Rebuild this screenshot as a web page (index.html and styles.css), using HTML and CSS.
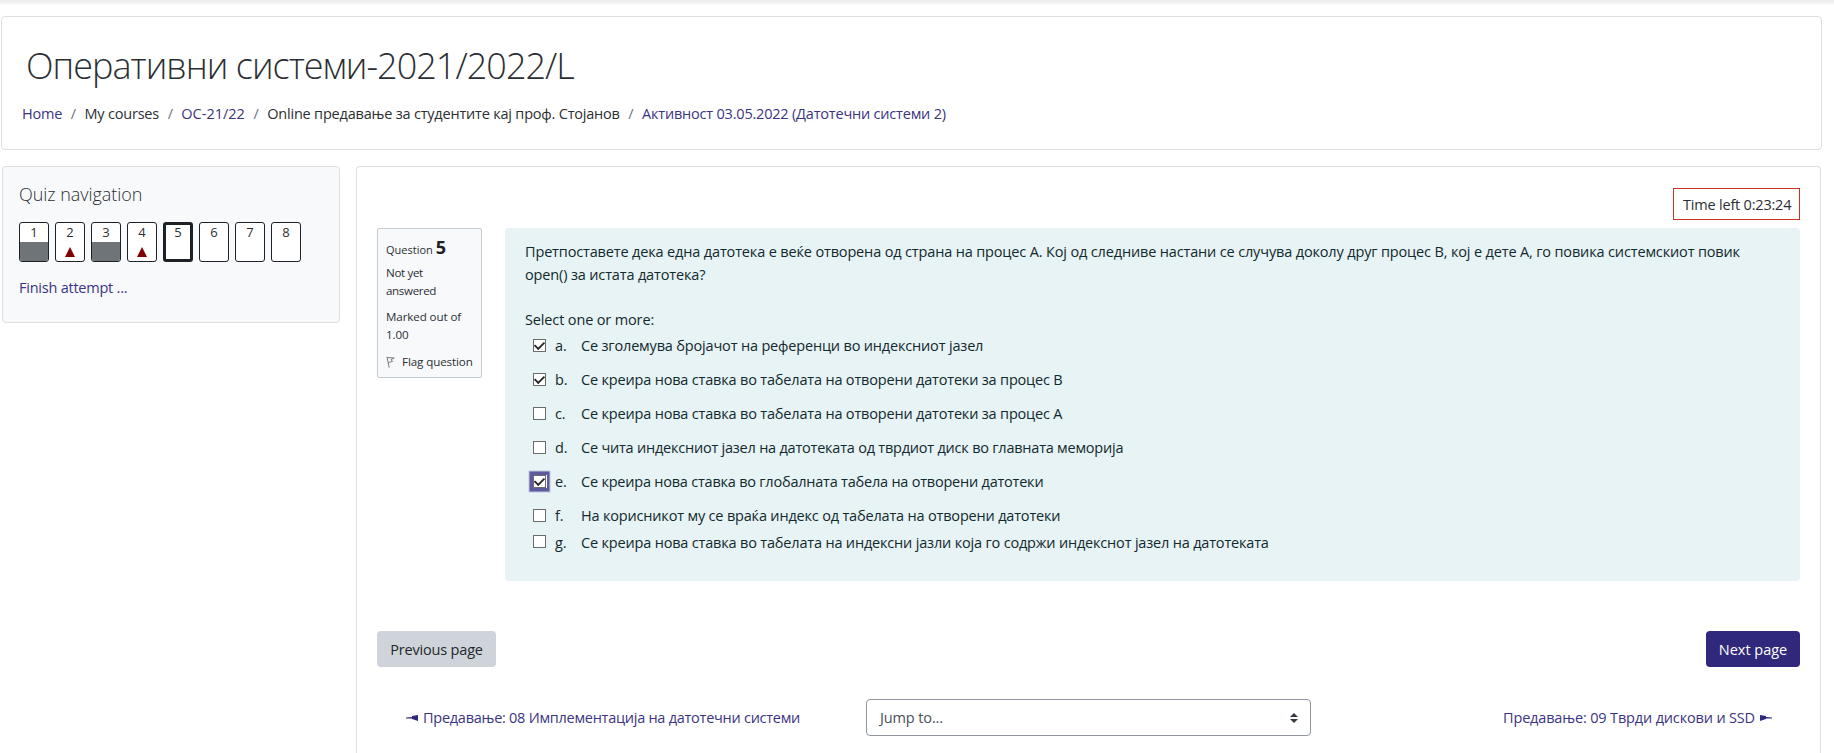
FILE: index.html
```
<!DOCTYPE html>
<html lang="mk">
<head>
<meta charset="utf-8">
<title>Оперативни системи-2021/2022/L</title>
<link rel="stylesheet" href="styles.css">
</head>
<body>
<div class="topbar"></div>
<div class="page">
  <header class="card page-header">
    <h1 class="course-title">Оперативни системи-2021/2022/L</h1>
    <nav class="breadcrumb">
      <a class="link" href="#">Home</a><span class="sep">/</span><span>My courses</span><span class="sep">/</span><a class="link wide" href="#">ОС-21/22</a><span class="sep">/</span><span>Online предавање за студентите кај проф. Стојанов</span><span class="sep">/</span><a class="link" href="#">Активност 03.05.2022 (Датотечни системи 2)</a>
    </nav>
  </header>
  <div class="columns">
    <aside class="card quiz-nav">
      <h2 class="quiz-nav-title">Quiz navigation</h2>
      <div class="qn-buttons">
        <a class="qn answered">1</a>
        <a class="qn flagged">2</a>
        <a class="qn answered">3</a>
        <a class="qn flagged">4</a>
        <a class="qn current">5</a>
        <a class="qn">6</a>
        <a class="qn">7</a>
        <a class="qn">8</a>
      </div>
      <a class="link finish" href="#">Finish attempt ...</a>
    </aside>
    <main class="card content">
      <div class="timer">Time left 0:23:24</div>
      <div class="question">
        <div class="info">
          <div class="info-no">Question <b>5</b></div>
          <div class="info-state">Not yet<br>answered</div>
          <div class="info-grade">Marked out of<br>1.00</div>
          <div class="info-flag"><svg class="flag" viewBox="0 0 9 12"><path d="M1 .8 3.2 11.6M1.2 1.5 8.2 2 5 3.6 6.6 5.4 2.4 6.6" fill="none" stroke="#777b80" stroke-width="1"/></svg>Flag question</div>
        </div>
        <div class="formulation">
          <p class="qtext">Претпоставете дека една датотека е веќе отворена од страна на процес А. Кој од следниве настани се случува доколу друг процес B, кој е дете А, го повика системскиот повик<br>open() за истата датотека?</p>
          <div class="prompt">Select one or more:</div>
          <div class="answers">
            <label class="answer"><input class="check" type="checkbox" checked><span class="letter">a.</span><span class="loose">Се зголемува бројачот на референци во индексниот јазел</span></label>
            <label class="answer"><input class="check" type="checkbox" checked><span class="letter">b.</span><span>Се креира нова ставка во табелата на отворени датотеки за процес B</span></label>
            <label class="answer"><input class="check" type="checkbox"><span class="letter">c.</span><span>Се креира нова ставка во табелата на отворени датотеки за процес А</span></label>
            <label class="answer"><input class="check" type="checkbox"><span class="letter">d.</span><span class="snug">Се чита индексниот јазел на датотеката од тврдиот диск во главната меморија</span></label>
            <label class="answer"><input class="check focused" type="checkbox" checked><span class="letter">e.</span><span class="snug">Се креира нова ставка во глобалната табела на отворени датотеки</span></label>
            <label class="answer"><input class="check" type="checkbox"><span class="letter">f.</span><span>На корисникот му се враќа индекс од табелата на отворени датотеки</span></label>
            <label class="answer"><input class="check" type="checkbox"><span class="letter">g.</span><span>Се креира нова ставка во табелата на индексни јазли која го содржи индекснот јазел на датотеката</span></label>
          </div>
        </div>
      </div>
      <div class="buttons">
        <button class="btn btn-prev">Previous page</button>
        <button class="btn btn-next">Next page</button>
      </div>
      <div class="activity-nav">
        <a class="link activity prev" href="#"><svg class="arrow" viewBox="0 0 12 6"><path d="M0 2.5 6 2V1L12 0V6L6 4V3.5L0 3.5Z"/></svg><span>Предавање: 08 Имплементација на датотечни системи</span></a>
        <div class="jump"><span>Jump to...</span><svg class="caret" viewBox="0 0 8 10"><path d="M4 0 8 4H0ZM4 10 0 6H8Z"/></svg></div>
        <a class="link activity next" href="#"><span>Предавање: 09 Тврди дискови и SSD</span><svg class="arrow" viewBox="0 0 12 6"><path d="M12 2.5 6 2V1L0 0V6L6 4V3.5L12 3.5Z"/></svg></a>
      </div>
    </main>
  </div>
</div>
</body>
</html>
```
FILE: styles.css
```
* { box-sizing: border-box; }

body {
  margin: 0;
  background: #fff;
  color: #2b2f33;
  font: 400 14.5px/23px "Open Sans", "Noto Sans", sans-serif;
  letter-spacing: -0.2px;
}

.topbar { height: 5px; background: linear-gradient(#efefef 40%, #fff); }

.page { padding: 11px 12px 0 1px; }

.card { border: 1px solid #dedfe1; border-radius: 4px; }

.link { color: #3b3482; text-decoration: none; }

.page-header { height: 134px; padding: 26px 20px 0; }

.course-title {
  margin: 0 0 14px;
  padding-left: 4px;
  font-size: 36px;
  line-height: 45px;
  font-weight: 300;
  letter-spacing: -0.97px;
}

.breadcrumb { display: flex; white-space: nowrap; }
.sep { padding: 0 8.6px; color: #6a737b; }
.wide { letter-spacing: 0; }

.columns { display: flex; align-items: flex-start; gap: 16px; margin-top: 16px; }

.quiz-nav {
  width: 338px;
  height: 157px;
  margin-left: 1px;
  padding: 15px 16px;
  background: #f8f9fb;
}
.quiz-nav-title {
  margin: 0 0 16px;
  font-size: 18px;
  line-height: 24px;
  font-weight: 300;
  letter-spacing: -0.05px;
}
.qn-buttons { display: flex; gap: 6px; margin-bottom: 14px; }
.qn {
  width: 30px;
  height: 40px;
  display: flex;
  flex-direction: column;
  align-items: center;
  border: 1px solid #1d2125;
  border-radius: 3px;
  background: #fff;
  font-size: 13px;
  line-height: 19px;
  letter-spacing: 0;
  overflow: hidden;
}
.qn.answered::after { content: ""; width: 100%; height: 19px; background: #6f7478; }
.qn.flagged::after {
  content: "";
  margin-top: 5px;
  border: 5px solid transparent;
  border-top: 0;
  border-bottom: 10px solid #800000;
}
.qn.current { border-width: 3px; line-height: 15px; }
.finish { letter-spacing: -0.23px; }

.content {
  flex: 1;
  height: 587px;
  margin-right: 1px;
  padding: 21px 20px 0;
  border-bottom: 0;
  border-radius: 4px 4px 0 0;
}

.timer {
  width: 127px;
  height: 32px;
  margin-left: auto;
  padding: 4px 0 0 9px;
  border: 1px solid #ca3120;
  white-space: nowrap;
}

.question { display: flex; align-items: flex-start; gap: 23px; margin-top: 8px; }

.info {
  width: 105px;
  height: 150px;
  padding: 8px 0 0 8px;
  border: 1px solid #c5cbd3;
  border-radius: 2px;
  background: #f8f9fb;
  font-size: 11.6px;
  line-height: 18px;
  letter-spacing: -0.1px;
  white-space: nowrap;
}
.info-no { height: 22px; margin-bottom: 5px; font-size: 11px; line-height: 21px; letter-spacing: 0; }
.info-no b { font-size: 18px; font-weight: 700; line-height: 20px; color: #1d2125; }
.info-state { letter-spacing: -0.35px; }
.info-grade { margin-top: 8px; }
.info-flag { display: flex; align-items: center; margin-top: 9px; }
.flag { width: 9px; height: 12px; margin-right: 7px; }

.formulation {
  flex: 1;
  height: 353px;
  padding: 12px 20px 0;
  border-radius: 4px;
  background: #e7f3f5;
  color: #12292d;
  letter-spacing: -0.18px;
}
.qtext { margin: 0 0 22px; white-space: nowrap; letter-spacing: -0.15px; }
.prompt { margin-bottom: 3px; letter-spacing: -0.14px; }
.answers { display: flex; flex-direction: column; gap: 11px; padding-left: 8px; }
.answer { display: flex; height: 23px; }
.answer:last-child { margin-top: -7px; }
.answer:last-child .check { margin-top: 4px; }
.letter { width: 26px; }
.loose { letter-spacing: -0.17px; }
.snug { letter-spacing: -0.22px; }

.check {
  appearance: none;
  flex: none;
  width: 13px;
  height: 13px;
  margin: 5px 9px 0 0;
  border: 1px solid #6b6b6b;
  background: #fff;
}
.check:checked { display: grid; place-items: center; }
.check:checked::after {
  content: "";
  width: 9px;
  height: 5px;
  border: solid #222;
  border-width: 0 0 2px 2px;
  transform: translateY(-1px) rotate(-45deg) scale(.88);
}
.check.focused { box-shadow: 1px 0 0 #fff, 0 0 0 3.5px #5f5a9d, 0 0 0 4.5px #c3c6df; }

.buttons { display: flex; justify-content: space-between; margin-top: 50px; }
.btn {
  height: 36px;
  padding: 0;
  border: 0;
  border-radius: 4px;
  font: inherit;
  letter-spacing: -0.17px;
}
.btn-prev { width: 119px; background: #ced4da; color: #24282c; }
.btn-next { width: 94px; background: #30287a; color: #fff; font-weight: 500; letter-spacing: -0.02px; }

.activity-nav {
  display: grid;
  grid-template-columns: 460px 445px 1fr;
  align-items: center;
  margin-top: 32px;
  padding: 0 28px 0 29px;
}
.activity { display: flex; align-items: center; gap: 5px; white-space: nowrap; }
.activity.prev { letter-spacing: -0.26px; }
.activity.next { justify-content: flex-end; letter-spacing: -0.16px; }
.arrow { width: 12px; height: 6px; fill: #30287a; }
.jump {
  height: 37px;
  display: flex;
  align-items: center;
  justify-content: space-between;
  padding: 0 12px 0 13px;
  border: 1px solid #8f959e;
  border-radius: 4px;
  color: #495057;
  letter-spacing: -0.12px;
}
.caret { width: 8px; height: 10px; fill: #343a40; }
```
